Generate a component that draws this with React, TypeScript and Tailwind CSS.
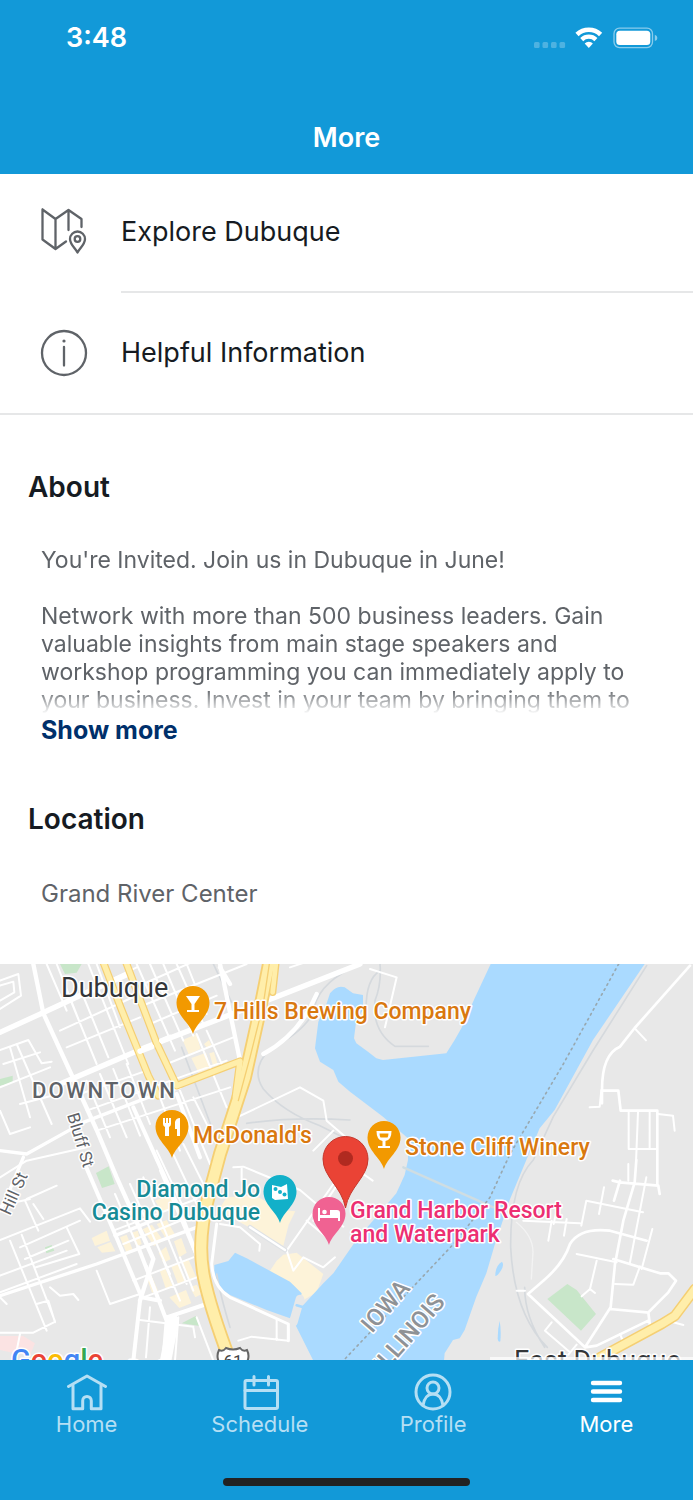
import { ReactNode, useState } from 'react';

type IconProps = { children: ReactNode };

const TabIcon = ({ children }: IconProps) => (
  <svg
    aria-hidden="true"
    viewBox="0 0 40 40"
    className="size-10 fill-none stroke-current stroke-3"
    strokeLinecap="round"
    strokeLinejoin="round"
  >
    {children}
  </svg>
);

const RowIcon = ({ children }: IconProps) => (
  <svg
    aria-hidden="true"
    viewBox="0 0 48 48"
    className="size-12 flex-none overflow-visible fill-none stroke-[#5f6368] stroke-[2.3]"
    strokeLinecap="round"
    strokeLinejoin="round"
  >
    {children}
  </svg>
);

const tabs = [
  {
    name: 'Home',
    icon: (
      <TabIcon>
        <path d="M1.5 14.5 20 4 38.5 14.5" />
        <path d="M6 13.5v23.2H15.7v-8a4.3 4.3 0 0 1 8.6 0v8h9.7v-23.2" />
      </TabIcon>
    ),
  },
  {
    name: 'Schedule',
    icon: (
      <TabIcon>
        <rect x="5" y="8.5" width="32.5" height="28" rx="1.5" />
        <path d="M5 18.5h32.5M14 4.5v8.5M28.5 4.5v8.5" />
      </TabIcon>
    ),
  },
  {
    name: 'Profile',
    icon: (
      <TabIcon>
        <circle cx="20" cy="20" r="17" />
        <circle cx="20" cy="16" r="6" />
        <path d="M10 33.5C11 26 15 22 20 22S29 26 30 33.5" />
      </TabIcon>
    ),
  },
  {
    name: 'More',
    icon: (
      <TabIcon>
        <path d="M7 11h27M7 19.5h27M7 28h27" strokeWidth="4.4" />
      </TabIcon>
    ),
  },
];

const links = [
  {
    name: 'Explore Dubuque',
    height: 'h-[119px]',
    divider: 'border-b-2',
    icon: (
      <RowIcon>
        <path d="M2.5-.5v30l13 9.5 10.5-7.5M2.5-.5l13 9.5 13-9 13 9v8M15.5 9v30M28.5 0v20" />
        <path d="M37.5 42.5c-2-4-7.5-8-7.5-13.5a7.5 7.5 0 0 1 15 0c0 5.500-5.500 9.500-7.500 13.500Z" />
        <circle cx="37.5" cy="29" r="2.8" />
      </RowIcon>
    ),
  },
  {
    name: 'Helpful Information',
    height: 'h-[120px]',
    divider: '',
    icon: (
      <RowIcon>
        <circle cx="24" cy="24" r="22" />
        <path d="M24 18v18.5" />
        <circle cx="24" cy="12" r="1.6" className="fill-[#5f6368] stroke-none" />
      </RowIcon>
    ),
  },
];

const StatusIcons = () => (
  <svg aria-hidden="true" viewBox="0 0 125 24" className="h-6 w-[125px] fill-white">
    <g opacity=".25">
      <rect x="1" y="16" width="5.6" height="6" rx="1.5" />
      <rect x="9.5" y="16" width="5.6" height="6" rx="1.5" />
      <rect x="18" y="16" width="5.6" height="6" rx="1.5" />
      <rect x="26.5" y="16" width="5.6" height="6" rx="1.5" />
    </g>
    <g className="fill-none stroke-white">
      <path d="M44 8.5a17 17 0 0 1 23.6 0" strokeWidth="4.6" />
      <path d="M48.7 13.6a10.2 10.2 0 0 1 14.2 0" strokeWidth="4.3" />
    </g>
    <path d="M55.8 22 51.7 17.5a5.6 5.6 0 0 1 8.2 0Z" />
    <rect x="81" y="2.2" width="38.5" height="19.4" rx="5.5" className="fill-none stroke-white/50" strokeWidth="1.3" />
    <rect x="83.3" y="4.7" width="34" height="14.4" rx="3.5" />
    <path d="M121.8 8.7q2.6 1 2.6 3.2t-2.6 3.2Z" opacity=".5" />
  </svg>
);

type PinProps = { x: number; y: number; color: string; children: ReactNode };

const Pin = ({ x, y, color, children }: PinProps) => (
  <g transform={`translate(${x} ${y})`}>
    <path
      d="M0 0C-3-11-16.5-18-16.5-31.5a16.5 16.5 0 0 1 33 0C16.5-18 3-11 0 0Z"
      fill={color}
    />
    {children}
  </g>
);

const Streets = () => (
  <g transform="scale(.33333)" fill="none" strokeLinecap="round" strokeLinejoin="round">
    {/* parks */}
    <g fill="#c8e6c9">
      <path d="M180 0h65l-15 26-35 4ZM0 345l38-10v22l-38 8ZM288 627l38-20 18 53-38 12ZM135 850l20-7 8 17-24 8ZM545 1078l42-22 12 30ZM1642 1005l60-45 28 18 58 72-45 50Z" />
    </g>
    <path d="M0 1116h70l35 22-15 35-45-5-45-10Z" fill="#fbe3e3" />

    {/* built-up blocks */}
    <g fill="#fdf3d9">
      <path d="M548 228l42-18 12 45-36 16ZM574 282l44-16 14 45-36 16ZM612 240l15-12 8 16-14 8ZM628 268l14-4 12 40-14 4Z" />
      <path d="M275 822l45-22 10 30-45 16ZM292 850l40-16 14 28-40 4ZM360 820l20-8 20 50-18 10ZM395 806l18-6 12 40-16 8ZM428 796l28-14 34 48-28 16ZM470 780l30-12 24 42-26 14ZM498 848l14 38-22 10-14-30ZM522 832l22-10 16 44-22 14ZM440 940l14-6 20 46-18 6ZM480 922l16-8 22 52-20 10ZM514 908l20-8 22 50-22 10ZM548 894l18-6 22 50-20 8ZM508 1000l50-22 16 40-36 14ZM570 970l20-8 16 28-20 10ZM465 710l50-20 14 40-44 12ZM680 700l60-4 40 6 60 36 46 4-20 40-16 64-160-88-30-26Z" />
      <path d="M830 890l20-18 40-6 80 64-20 55-38 22-30-42-52-32-22-10Z" />
    </g>

    {/* river */}
    <g fill="#aadaff">
      <path d="M1472 0 1424 103 1384 193 1364 228 1339 268 1149 288 1129 283 1104 263 1069 238 1062 223 1069 168 1089 138V93L1059 88 1034 70Q1010 62 990 88L980 118 955 173 945 253 960 293 1000 318 1015 353 1050 383 1149 458 1224 523V588L1214 633 1189 688 1129 758 1069 828 1000 928 970 958 910 1023 890 1030 885 1080 940 1190H1332L1334 1168 1359 1128 1379 1123 1394 1098 1429 998 1459 928 1484 843 1529 708 1579 588 1619 493 1664 438 1779 228 1934 0Z" />
      <path d="M643 903 685 891 705 866 740 883 870 953 905 988 900 1013 870 1063 800 1038 690 993 655 968 643 928Z" />
    </g>
    <path d="M1486 935q0-30 20-42 8 10-4 28t-16 14ZM1499 1070q5 30 2 62-6 5-8-8 0-30 6-54Z" fill="#aadaff" />
    <path d="M900 1005 880 1075" stroke="#e8e8e8" strokeWidth="26" />
    <path d="M890 1024 910 1030" stroke="#aadaff" strokeWidth="8" />

    {/* railways and paths */}
    <g stroke="#d5d9dd" strokeWidth="5">
      <path d="M640 0l55 115M1140 0q5 60-15 110-10 90 60 137h100M1140 20q-50 30-40 150M1050 15q-100 50-110 130-30 60-130 110-60 60-20 120 60 70 170 110l120 60M740 478q140-20 310-10M545 250l90 240M1940 5 1780 258 1660 458 1600 588Q1530 660 1532 850q10 200 110 300M1574 970q0 90 60 180M650 930q10 60 40 160" />
    </g>
    <path d="M1210 610 1480 730" stroke="#cfdde2" strokeWidth="7" />
    <path d="M1549 775q50 40 50 90l-5 80" stroke="#f3f3f3" strokeWidth="4" />

    {/* side streets */}
    <g stroke="#fff" strokeWidth="6">
      <path d="M0 50l55-20 8 65-63 40M0 65l40-12 3 32-43 25M0 258l85-30 40 70 30-5M30 250l60 210M50 240l105 240M0 440l30 70 60-20M60 420l95-25M0 370l150-60M10 300l110-35" />
      <path d="M140 0l60 140M170 0l75 190M200 80l90 220M235 60l90 220M265 0l120 300M290 0l70 190M160 130l250-120M180 200l240-110M200 250l220-90M410 0l115 260M450 0l100 230M490 0l90 215M530 0l80 180M560 0l60 150M430 60l200-90M440 120l300-120M450 180l200-85M500 300l200-80M590 210l90 220M620 200l50 110M260 350l70 170M300 330l80 190M340 315l80 200M380 300l70 180M240 390l200-70M260 440l420-150M290 500l400-130M540 380l90 220M580 400l90 180M480 400l60 160M690 470l210-100 70 40 10 60 70 60M870 10l60-20" />
      <path d="M0 640l80-50 180-40M80 705l90-40M75 710l40 90M0 725l90-20M100 720l30 45M30 830l110 270M65 812l100 260M0 828l240-95 30 40M60 850l180-80M75 885l130-55M200 790l38 80-130 40M0 935l200-75M0 985l230-85M0 1000l20 20M110 1020l35-10 20 65M150 970l30 25 40-5 15 18M290 920l40 100 90-30M0 1106h100l60-30M60 1110l-10 50" />
      <path d="M345 690l90 210M390 660l120 270M430 640l130 320M480 620l110 260M340 800l250-95M370 840l220-90M400 950l180-70M430 1000l160-60M470 560l80 170M510 550l80 170M550 540l70 140M420 1068l160 20M450 1030l-12 150M535 1060l-10 130M580 1090l5 30M590 1060l50 130M440 905l50 140M490 890l50 120M540 880l40 100" />
      <path d="M700 610l30-2 170 70 130 110M725 610v40M1000 660L860 860M1020 650l-80 120M920 770l60 50M860 860l20 60 30-40 60 30 35-30M660 780l60 10 60 50-2 20M1090 630l28 20M830 1068v60M715 1130l40-12 110 12M865 1095v35M1110 15l80 25-35 150M1000 500l-60 60" />
      <path d="M1906 195l32 34M1769 430l30-2 5-50M1886 445v110h85M1914 445l-6 150M1949 445v110M1974 450l45 5 5 45M1812 670l-15 80M1744 785l15-75 170 35M1674 720l-13 60M1655 770l-10 60M1700 765l-8 50M1570 770l170 8M1730 870l120 25M1790 890l-20 85 15 12M1770 975l-25 22M1845 960l55 2 20-55M1957 795l-32 120M1939 640l-50 260M1885 600v50M1550 980h25M1655 1075l-20 25 75 65M1730 1142l-25 30M1860 1110l10 24M2020 1075l30 8" />
    </g>

    {/* main streets */}
    <g stroke="#fff" strokeWidth="14">
      <path d="M100 0 130 148 215 333 290 498 350 640 460 885 420 1010" strokeWidth="13" />
      <path d="M0 205 110 155 250 90 385 30M180 360 320 300 430 253 650 168 830 98 1080 0" strokeWidth="16" />
      <path d="M0 560 80 570 250 475 450 398 540 370M70 580 20 700 0 740M0 995 290 900 590 790M345 815 470 765" strokeWidth="10" />
      <path d="M400 430 540 740 600 900M530 390 600 580M250 590 345 810 425 1000 480 1010M415 850 500 1070 490 1190M420 1010 400 1190M500 1060 620 1020" strokeWidth="12" />
      <path d="M520 1070 497 1190" strokeWidth="34" />
      <path d="M660 0 720 290M950 90Q900 210 790 270M690 60 660 10" strokeWidth="13" />
      <path d="M650 780 635 900Q640 970 690 1000L865 1080 865 1130" strokeWidth="9" />
      <path d="M2070 5 1904 192 1860 248Q1806 270 1806 378V418M1806 380H1855L1862 440H1972V660" strokeWidth="8" />
      <path d="M1909 588 1904 655 1870 770 1845 900 1832 1030 1755 1150M1838 650 1859 655 1975 665 1979 690M1860 650 1842 710M1584 990 1630 950Q1690 900 1710 840 1740 790 1830 800L1940 830M1840 885 1980 928 2005 928 2028 950 2005 985 1945 1045 1950 1085M1830 1035 1940 1045M1584 990 1755 1150 1790 1145 1945 1070" strokeWidth="8" />
      <path d="M750 790 855 858" stroke="#dfe2e5" strokeWidth="14" />
      <path d="M750 790 855 858" strokeWidth="7" />
    </g>

    {/* highways */}
    <g stroke="#f5cf73">
      <path d="M310 -5 365 138 445 335 475 395M378 -5 470 238 530 365 720 292M720 292 706 400" strokeWidth="23" />
      <path d="M808 -5 775 160 735 340 660 570 625 700Q590 830 612 940 630 1030 690 1190" strokeWidth="42" />
      <path d="M828 -5 818 85" strokeWidth="22" />
      <path d="M1800 1180 1985 1080 2025 1055 2085 975" strokeWidth="32" />
    </g>
    <g stroke="#ffeeaa">
      <path d="M310 -5 365 138 445 335 475 395M378 -5 470 238 530 365 720 292M720 292 706 400" strokeWidth="16" />
      <path d="M808 -5 775 160 735 340 660 570 625 700Q590 830 612 940 630 1030 690 1190" strokeWidth="31" />
      <path d="M828 -5 818 85" strokeWidth="14" />
      <path d="M1800 1180 1985 1080 2025 1055 2085 975" strokeWidth="23" />
    </g>
    <path d="M808 0 790 120 750 280 715 410" stroke="#f5cf73" strokeWidth="4" />
    <path d="M420 262 455 248M485 230 510 220" stroke="#fff" strokeWidth="16" />

    {/* state line */}
    <path d="M1856 0 1690 300 1530 570 1470 700 1370 830 1030 1190" stroke="#98a8b0" strokeWidth="5" strokeDasharray="5 12" />
  </g>
);

const LocationMap = () => (
  <svg
    role="img"
    aria-label="Map of Grand River Center, Dubuque"
    viewBox="0 0 693 396"
    preserveAspectRatio="xMidYMid slice"
    className="block h-[396px] w-full flex-none bg-[#e8e8e8] font-['Roboto',sans-serif]"
  >
    <Streets />

    <g stroke="#fff" strokeWidth="3" strokeLinejoin="round" paintOrder="stroke">
      <text x="61" y="33" fontSize="27" fill="#333639">Dubuque</text>
      <text x="514" y="406" fontSize="27" fill="#333639">East Dubuque</text>
      <text x="32" y="134" fontSize="22" fill="#5f6368" className="font-medium tracking-widest">
        DOWNTOWN
      </text>
      <g fontSize="17" fill="#5f6368">
        <text transform="translate(67 151) rotate(73)">Bluff St</text>
        <text transform="translate(10 252) rotate(-66)">Hill St</text>
      </g>
      <g fontSize="23" fill="#d9780f" className="font-medium">
        <text x="214" y="55">7 Hills Brewing Company</text>
        <text x="193" y="179">McDonald&#39;s</text>
        <text x="405" y="191">Stone Cliff Winery</text>
      </g>
      <g fontSize="23" fill="#178b96" textAnchor="end" className="font-medium">
        <text x="260" y="233">Diamond Jo</text>
        <text x="260" y="256">Casino Dubuque</text>
      </g>
      <g fontSize="23" fill="#ec2f72" className="font-medium">
        <text x="350" y="254">Grand Harbor Resort</text>
        <text x="350" y="278">and Waterpark</text>
      </g>
      <g fontSize="24" fill="#8e9296" className="font-medium">
        <text transform="translate(372 370) rotate(-49)">IOWA</text>
        <text transform="translate(384 410) rotate(-49)">ILLINOIS</text>
      </g>
      <text x="128" y="409" fontSize="19" fill="#7a4a10">Port</text>
      <text x="11" y="406" fontSize="29" className="font-medium">
        <tspan fill="#4285f4">G</tspan>
        <tspan fill="#ea4335">o</tspan>
        <tspan fill="#fbbc05">o</tspan>
        <tspan fill="#4285f4">g</tspan>
        <tspan fill="#34a853">l</tspan>
        <tspan fill="#ea4335">e</tspan>
      </text>
    </g>

    <path d="M219 386q4 2 7-2 7 3 14 0 3 4 7 2 3 6 0 12h-28q-3-6 0-12Z" fill="#fff" stroke="#666" strokeWidth="2" />
    <text x="233" y="403" fontSize="17" textAnchor="middle" fill="#444">61</text>
    <path d="M490 393h203v3H490Z" fill="#fff" opacity=".7" />

    <Pin x={193} y={70} color="#f29900">
      <path d="M-7-38H7L1.5-30v6H6v2H-6v-2h4.5v-6Z" fill="#fff" />
    </Pin>
    <Pin x={172} y={194} color="#f29900">
      <path d="M-9-40h2v5h1v-5h2v5h1v-5h2v6q0 2-2 3v9h-4v-9q-2-1-2-3ZM3-36q1-4 5-4v18H5v-7H3Z" fill="#fff" />
    </Pin>
    <Pin x={384} y={205} color="#f29900">
      <path d="M-7.5-38h15q0 9-6 10v5H6v2H-6v-2h4.5v-5q-6-1-6-10Zm3 2.5q0 2 1 4h7q1-2 1-4Z" fill="#fff" fillRule="evenodd" />
    </Pin>
    <Pin x={280} y={259} color="#12b0c9">
      <path d="M-8-38 1-36 7-39 8-24-5-23-8-25Z" fill="#fff" />
      <g fill="#12b0c9">
        <circle cx="-4.5" cy="-34" r="2" />
        <circle cx="0" cy="-31" r="2" />
        <circle cx="4.5" cy="-28.5" r="2" />
      </g>
    </Pin>

    <path d="M345.5 244C342 223 323 213 323 195a22.5 22.5 0 0 1 45 0C368 213 349 223 345.5 244Z" fill="#ea4335" stroke="#c5372c" />
    <circle cx="345.5" cy="194.5" r="7.5" fill="#b02a20" />

    <Pin x={329} y={281} color="#f06292">
      <path d="M-11-37h2v7H1v-5h7q3 0 3 3v8H9v-3H-9v3h-2Z" fill="#fff" />
      <circle cx="-4.5" cy="-33" r="2.3" fill="#fff" />
    </Pin>
  </svg>
);

const App = () => {
  const [activeTab, setActiveTab] = useState('More');
  const [expanded, setExpanded] = useState(false);

  return (
    <div className="flex min-h-screen flex-col bg-white font-['Inter',sans-serif] text-[#161b22]">
      <header className="h-[174px] bg-[#1299d8] text-white">
        <div className="flex h-[76px] items-center justify-between pr-[35px] pl-[66px]">
          <time className="text-[27px] font-semibold">3:48</time>
          <StatusIcons />
        </div>
        <h1 className="mt-11 text-center text-[27px] leading-9 font-semibold">More</h1>
      </header>

      <main className="flex-1">
        <nav aria-label="Guides" className="border-b-2 border-[#e6e7e8]">
          {links.map((link) => (
            <a key={link.name} href="#" className={`flex items-center gap-[33px] pl-10 ${link.height}`}>
              {link.icon}
              <span className={`flex h-full flex-1 items-center border-[#e6e7e8] text-[27px] ${link.divider}`}>
                {link.name}
              </span>
            </a>
          ))}
        </nav>

        <section className="px-7 pt-[54px]">
          <h2 className="text-[28px] leading-9 font-semibold">About</h2>
          <div className="mt-[41px] px-[13px] text-[23px] leading-7 text-[#5f6368]">
            <div className={expanded ? '' : 'h-[168px] overflow-hidden mask-b-from-85% mask-b-to-100%'}>
              <p>You&#39;re Invited. Join us in Dubuque in June!</p>
              <p className="mt-7">
                Network with more than 500 business leaders. Gain valuable insights from main stage
                speakers and workshop programming you can immediately apply to your business. Invest
                in your team by bringing them to
              </p>
            </div>
            <button
              onClick={() => setExpanded(!expanded)}
              className="block text-[25px] leading-8 font-bold text-[#00306b]"
            >
              {expanded ? 'Show less' : 'Show more'}
            </button>
          </div>
        </section>

        <section className="pt-[55px]">
          <h2 className="px-7 text-[28px] leading-9 font-semibold">Location</h2>
          <p className="mt-[41px] mb-[54px] px-[41px] text-2xl leading-8 text-[#5f6368]">
            Grand River Center
          </p>
          <LocationMap />
        </section>
      </main>

      <nav aria-label="Tabs" className="flex h-[140px] flex-col justify-between bg-[#1299d8] pt-3 pb-[14px]">
        <div className="grid grid-cols-4">
          {tabs.map((tab) => (
            <a
              key={tab.name}
              href="#"
              onClick={() => setActiveTab(tab.name)}
              className={`flex flex-col items-center text-[22px] leading-6 ${
                tab.name === activeTab ? 'text-white' : 'text-[#b5dff4]'
              }`}
            >
              {tab.icon}
              {tab.name}
            </a>
          ))}
        </div>
        <div className="mx-auto h-2 w-[247px] rounded-full bg-[#222]" />
      </nav>
    </div>
  );
};

export default App;
